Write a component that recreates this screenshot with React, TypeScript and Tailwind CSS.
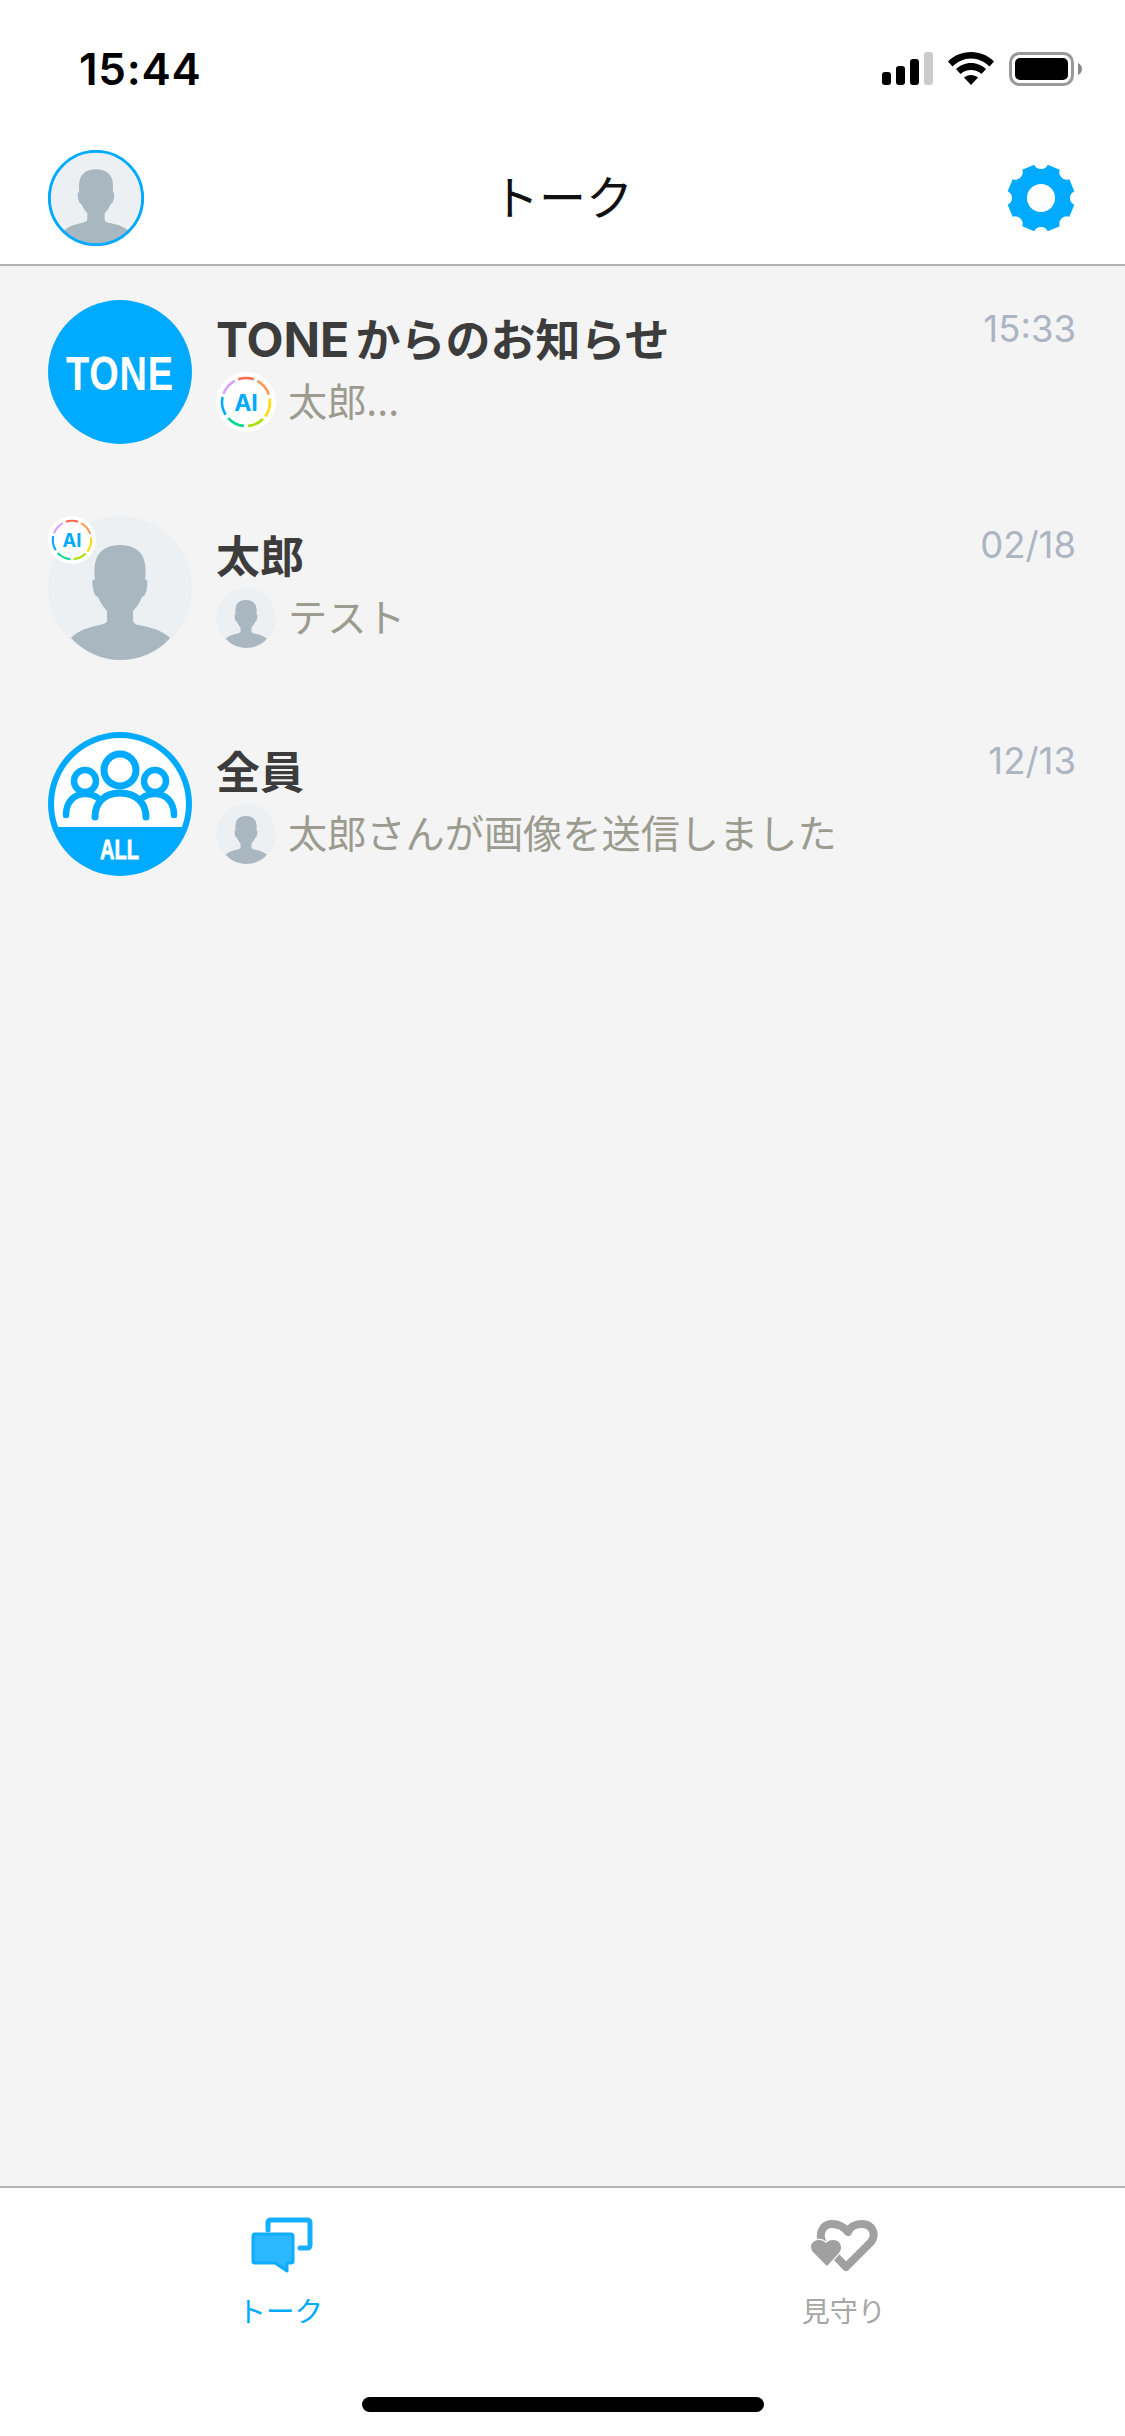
import React from "react";

const BLUE = "#00aaff";

function polar(cx: number, cy: number, r: number, deg: number) {
  const a = ((deg - 90) * Math.PI) / 180;
  return [cx + r * Math.cos(a), cy + r * Math.sin(a)];
}

function arc(cx: number, cy: number, r: number, a0: number, a1: number) {
  const [x0, y0] = polar(cx, cy, r, a0);
  const [x1, y1] = polar(cx, cy, r, a1);
  return `M${x0} ${y0} A${r} ${r} 0 0 1 ${x1} ${y1}`;
}

function gearPath() {
  const cx = 34, cy = 34, R = 34;
  let d = "";
  for (let k = 0; k < 8; k++) {
    const a = 22.5 + 45 * k;
    const [x1, y1] = polar(cx, cy, R, a - 11);
    const [x2, y2] = polar(cx, cy, R, a + 11);
    const [x3, y3] = polar(cx, cy, R, a + 45 - 11);
    d += `${k === 0 ? "M" : "L"}${x1} ${y1} L${x2} ${y2} A7.5 7.5 0 0 0 ${x3} ${y3} `;
  }
  return d + `Z M48 34 A14 14 0 1 0 20 34 A14 14 0 1 0 48 34 Z`;
}

const PERSON =
  "M72 29C61 29 53 33 49 41C46 48 46 56 47 64C44 62 44 66 45 72C46 78 47 80 50 81C52 86 56 92 59 95L59 104C59 107 56 108 52 109C42 111 30 114 23 122C36 136 54 144 72 144C92 144 110 136 122 122C114 114 102 111 90 109C87 108 85 107 85 104L85 95C89 91 92 86 94 81C97 80 98 77 99 72C100 66 99 62 97 64C98 56 98 48 95 41C91 33 83 29 72 29Z";

function PersonAvatar({ size, ring }: { size: number; ring?: boolean }) {
  return (
    <svg width={size} height={size} viewBox="0 0 144 144" className="block shrink-0">
      <circle cx="72" cy="72" r="72" fill="#ecf0f3" />
      <path d={PERSON} fill="#a9b7c1" />
      {ring && <circle cx="72" cy="72" r="70" fill="none" stroke={BLUE} strokeWidth="4.5" />}
    </svg>
  );
}

function AiBadge({ size }: { size: number }) {
  const segs: [string, number, number][] = [
    ["#ff6a4d", -19, 19],
    ["#ff9a55", 28, 72],
    ["#ffdd00", 82, 127],
    ["#a6e000", 135, 175],
    ["#00d98b", 185, 228],
    ["#00aaff", 238, 282],
    ["#d8a0ff", 290, 332],
  ];
  return (
    <svg width={size} height={size} viewBox="0 0 60 60" className="block shrink-0">
      <circle cx="30" cy="30" r="30" fill="#fff" />
      {segs.map(([c, a, b]) => (
        <path key={c} d={arc(30, 30, 24, a, b)} fill="none" stroke={c} strokeWidth="2.6" />
      ))}
      <text x="30" y="38.5" textAnchor="middle" fontSize="23" fontWeight="700" fill={BLUE} fontFamily="Inter, sans-serif">
        AI
      </text>
    </svg>
  );
}

function ToneAvatar() {
  return (
    <svg width="144" height="144" viewBox="0 0 144 144" className="block shrink-0">
      <circle cx="72" cy="72" r="72" fill={BLUE} />
      <g transform="translate(18 90) scale(0.79 1)">
        <text x="0" y="0" fontSize="48" fontWeight="700" letterSpacing="1" fill="#fff" fontFamily="'Liberation Sans', sans-serif">
          TONE
        </text>
      </g>
    </svg>
  );
}

function AllAvatar() {
  return (
    <svg width="144" height="144" viewBox="0 0 144 144" className="block shrink-0">
      <defs>
        <clipPath id="allTop">
          <rect x="0" y="0" width="144" height="95" />
        </clipPath>
      </defs>
      <circle cx="72" cy="72" r="72" fill={BLUE} />
      <circle cx="72" cy="72" r="66" fill="#fff" clipPath="url(#allTop)" />
      <g fill="none" stroke={BLUE} strokeLinecap="round">
        <circle cx="72" cy="38" r="16" strokeWidth="7" />
        <circle cx="37" cy="49" r="11" strokeWidth="6.5" />
        <circle cx="107" cy="49" r="11" strokeWidth="6.5" />
        <path d="M47 85C47 72 55 61 72 61C89 61 98 72 98 85" strokeWidth="7" />
        <path d="M18 83C18 71 25 62 37 62C42 62 46 63 50 66" strokeWidth="6.5" />
        <path d="M126 83C126 71 119 62 107 62C102 62 98 63 94 66" strokeWidth="6.5" />
      </g>
      <text x="52" y="127" fontSize="28" fontWeight="700" fill="#fff" stroke="#fff" strokeWidth="0.8" textLength="39" lengthAdjust="spacingAndGlyphs" fontFamily="'Liberation Sans', sans-serif">
        ALL
      </text>
    </svg>
  );
}

function Row({
  avatar,
  badge,
  title,
  time,
  subIcon,
  sub,
}: {
  avatar: React.ReactNode;
  badge?: boolean;
  title: React.ReactNode;
  time: string;
  subIcon: React.ReactNode;
  sub: string;
}) {
  return (
    <div className="flex h-[144px]">
      <div className="relative h-[144px] w-[144px] shrink-0">
        {avatar}
        {badge && (
          <div className="absolute left-0 top-0">
            <AiBadge size={48} />
          </div>
        )}
      </div>
      <div className="ml-[24px] flex-1">
        <div className="flex h-[72px] items-start justify-between">
          <div className="mt-[6px] text-[44px] font-bold leading-[64px] text-[#3c3c3c]">{title}</div>
          <div className="mt-[7px] font-['Inter',sans-serif] text-[36.5px] leading-[44px] text-[#adb5c2]">{time}</div>
        </div>
        <div className="relative flex h-[60px] items-center">
          {subIcon}
          <div className="ml-[12px] -translate-y-[3px] text-[39.2px] leading-[60px] text-[#9b9b8f]">{sub}</div>
        </div>
      </div>
    </div>
  );
}

export default function App() {
  return (
    <div className="flex h-[2436px] w-[1125px] flex-col overflow-hidden bg-white font-['Noto_Sans_CJK_JP',sans-serif]">
      <header className="h-[266px] shrink-0 border-b-2 border-[#b2b2b2] bg-white">
        <div className="flex h-[132px] items-start justify-between pl-[79px] pr-[43px] pt-[50px]">
          <div className="font-['Inter',sans-serif] text-[44px] font-semibold leading-[38px] tracking-[0.7px] text-black">15:44</div>
          <div className="mt-[2px] flex items-start">
            <svg width="51" height="33" viewBox="0 0 51 33" className="block">
              <rect x="0" y="20" width="9" height="13" rx="3" fill="#000" />
              <rect x="14" y="14" width="9" height="19" rx="3" fill="#000" />
              <rect x="28" y="7" width="9" height="26" rx="3" fill="#000" />
              <rect x="42" y="0" width="9" height="33" rx="3" fill="#ccc" />
            </svg>
            <svg width="46" height="33" viewBox="0 0 46 33" className="ml-[15px] block">
              <path d="M23 0C14 0 6 3.500 0 9.500L4.500 14.500C9.500 9.500 16 6.500 23 6.500C30 6.500 36.500 9.500 41.500 14.500L46 9.500C40 3.500 32 0 23 0Z" fill="#000" />
              <path d="M23 11C17 11 12 13.500 8 17L12.500 22C15.500 19.500 19 18 23 18C27 18 30.500 19.500 33.500 22L38 17C34 13.500 29 11 23 11Z" fill="#000" />
              <path d="M23 23C20.500 23 18 24 16 25.500L23 33L30 25.500C28 24 25.500 23 23 23Z" fill="#000" />
            </svg>
            <svg width="73" height="34" viewBox="0 0 73 34" className="ml-[15px] block">
              <rect x="1.500" y="1.500" width="62" height="31" rx="9" fill="#fff" stroke="#999" strokeWidth="3" />
              <rect x="6" y="6" width="53" height="22" rx="5" fill="#000" />
              <path d="M69 11C71.500 12 73 14.500 73 17C73 19.500 71.500 22 69 23Z" fill="#888" />
            </svg>
          </div>
        </div>
        <div className="relative flex h-[132px] items-center justify-between pl-[48px] pr-[50px]">
          <PersonAvatar size={96} ring />
          <div className="absolute inset-x-0 top-[-3px] text-center text-[47px] leading-[132px] text-[#111]">トーク</div>
          <svg width="68" height="68" viewBox="0 0 68 68" className="relative block">
            <path d={gearPath()} fill={BLUE} fillRule="evenodd" />
          </svg>
        </div>
      </header>

      <main className="flex flex-1 flex-col gap-[72px] bg-[#f4f4f4] pl-[48px] pr-[49px] pt-[34px]">
        <Row
          avatar={<ToneAvatar />}
          title={
            <>
              <span className="font-['Inter',sans-serif] text-[48px] leading-[64px]">TONE</span>
              <span className="text-[45px] [word-spacing:-4px]"> からのお知らせ</span>
            </>
          }
          time="15:33"
          subIcon={<AiBadge size={60} />}
          sub="太郎..."
        />
        <Row
          avatar={<PersonAvatar size={144} />}
          badge
          title="太郎"
          time="02/18"
          subIcon={<PersonAvatar size={60} />}
          sub="テスト"
        />
        <Row
          avatar={<AllAvatar />}
          title="全員"
          time="12/13"
          subIcon={<PersonAvatar size={60} />}
          sub="太郎さんが画像を送信しました"
        />
      </main>

      <footer className="h-[250px] shrink-0 border-t-2 border-[#b2b2b2] bg-white">
        <div className="grid h-[160px] grid-cols-2">
          <div className="flex flex-col items-center pt-[29px]">
            <svg width="64" height="57" viewBox="14 11 64 57" className="block">
              <path d="M33 24V17Q33 14 36 14H72Q75 14 75 17V39Q75 42 72 42H65" fill="none" stroke="#16aeff" strokeWidth="5" strokeLinecap="round" />
              <path d="M20 28H56Q58 28 58 30V55Q58 57 56 57H52V65L40 57H20Q18 57 18 55V30Q18 28 20 28Z" fill="#2cb8ff" stroke="#0cacff" strokeWidth="3" strokeLinejoin="round" />
            </svg>
            <div className="mt-[18px] -translate-x-[1px] text-[28.5px] leading-[36px] text-[#00aaff]">トーク</div>
          </div>
          <div className="flex flex-col items-center pt-[29px]">
            <svg width="72" height="57" viewBox="14 10 72 57" className="block">
              <path d="M52 60L77 35C83 27 78 17 68 17C60 17 56 20 54 25C50 20 46 17 38 17C28 17 24 28 29 36L52 60Z" fill="none" stroke="#a0a0a0" strokeWidth="8" strokeLinejoin="round" />
              <path d="M33 59L20 46C14 40 18 33 25 33C28 33 30 34 32 36C34 34 36 33 39 33C47 33 49 41 45 46Z" fill="#a0a0a0" stroke="#fff" strokeWidth="2.5" paintOrder="stroke" />
            </svg>
            <div className="mt-[18px] text-[28px] leading-[36px] text-[#a6a6a6]">見守り</div>
          </div>
        </div>
        <div className="mt-[49px] flex justify-center">
          <div className="h-[15px] w-[402px] rounded-full bg-black" />
        </div>
      </footer>
    </div>
  );
}
